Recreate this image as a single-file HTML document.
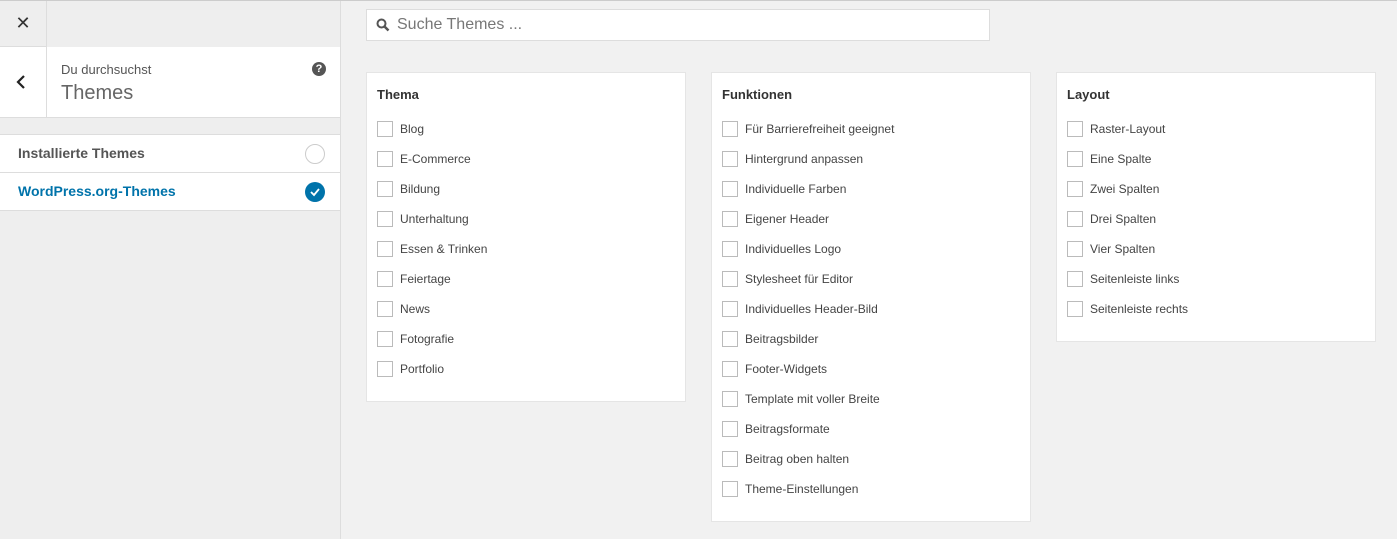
<!DOCTYPE html><html><head><style>
body{margin:0;width:1397px;height:539px;background:#f1f1f1;font-family:"Liberation Sans",sans-serif;position:relative;overflow:hidden}
svg{display:block}
.top{position:absolute;left:0;top:0;width:1397px;height:1px;background:#ccc;z-index:5}
.side{position:absolute;left:0;top:0;width:340px;height:539px;background:#eee;border-right:1px solid #ddd}
.x{position:absolute;left:0;top:0;width:46px;height:46px;border-right:1px solid #ddd;border-bottom:1px solid #ddd;font-size:18px;text-align:center;line-height:46px;color:#333}
.hdr{position:absolute;left:0;top:47px;width:340px;height:70px;background:#fff;border-bottom:1px solid #ddd}
.back{position:absolute;left:0;top:0;width:46px;height:70px;border-right:1px solid #ddd}
.lst{position:absolute;left:0;top:134px;width:340px;background:#fff;border-top:1px solid #ddd}
.it{height:37px;border-bottom:1px solid #ddd;position:relative;font-weight:bold;font-size:14px;line-height:37px;padding-left:18px;color:#555}
.srch{position:absolute;left:366px;top:9px;width:622px;height:30px;background:#fff;border:1px solid #ddd}
.p{position:absolute;top:72px;width:318px;background:#fff;border:1px solid #e5e5e5;font-size:12px;color:#444}
.p h{display:block;font-weight:bold;font-size:13px;color:#333;position:absolute;left:10px;top:14px}
.p ul{list-style:none;margin:0;padding:48px 0 0 10px}
.p li{height:30px;line-height:16px;position:relative;padding-left:23px}
.p li:before{content:"";position:absolute;left:0;top:0;width:14px;height:14px;border:1px solid #bbb;background:#fff}
</style></head><body>
<div class="top"></div>
<div class="side">
<div class="x">✕</div>
<div class="hdr"><div class="back"><svg style="position:absolute;left:16px;top:28px" width="10" height="14" viewBox="0 0 10 14"><path d="M8 1L2 7l6 6" fill="none" stroke="#222" stroke-width="2.2"/></svg></div>
<div style="position:absolute;left:61px;top:15px;font-size:13px;color:#555">Du durchsuchst</div>
<div style="position:absolute;left:61px;top:35px;font-size:20px;color:#666;font-weight:300">Themes</div>
<div style="position:absolute;left:312px;top:15px;width:14px;height:14px;border-radius:50%;background:#555;color:#fff;font-size:11px;font-weight:bold;text-align:center;line-height:14px">?</div>
</div>
<div class="lst">
<div class="it">Installierte Themes<span style="position:absolute;left:305px;top:9px;width:20px;height:20px;border:1px solid #ccc;border-radius:50%;box-sizing:border-box"></span></div>
<div class="it" style="color:#0073aa">WordPress.org-Themes<span style="position:absolute;left:305px;top:9px;width:20px;height:20px;border-radius:50%;background:#0073aa"><svg width="20" height="20"><path d="M6 10l3 3 5-6" fill="none" stroke="#fff" stroke-width="1.8"/></svg></span></div>
</div>
</div>
<div class="srch"><svg style="position:absolute;left:9px;top:8px" width="14" height="14"><circle cx="5.5" cy="5.5" r="4" fill="none" stroke="#555" stroke-width="2"/><path d="M8.5 8.5l4 4" stroke="#555" stroke-width="2.5"/></svg><span style="position:absolute;left:30px;top:6px;font-size:16px;color:#777">Suche Themes ...</span></div>
<div class="p" style="left:366px;height:328px"><h>Thema</h><ul><li>Blog</li><li>E-Commerce</li><li>Bildung</li><li>Unterhaltung</li><li>Essen &amp; Trinken</li><li>Feiertage</li><li>News</li><li>Fotografie</li><li>Portfolio</li></ul></div>
<div class="p" style="left:711px;height:448px"><h>Funktionen</h><ul><li>Für Barrierefreiheit geeignet</li><li>Hintergrund anpassen</li><li>Individuelle Farben</li><li>Eigener Header</li><li>Individuelles Logo</li><li>Stylesheet für Editor</li><li>Individuelles Header-Bild</li><li>Beitragsbilder</li><li>Footer-Widgets</li><li>Template mit voller Breite</li><li>Beitragsformate</li><li>Beitrag oben halten</li><li>Theme-Einstellungen</li></ul></div>
<div class="p" style="left:1056px;height:268px"><h>Layout</h><ul><li>Raster-Layout</li><li>Eine Spalte</li><li>Zwei Spalten</li><li>Drei Spalten</li><li>Vier Spalten</li><li>Seitenleiste links</li><li>Seitenleiste rechts</li></ul></div>
</body></html>
